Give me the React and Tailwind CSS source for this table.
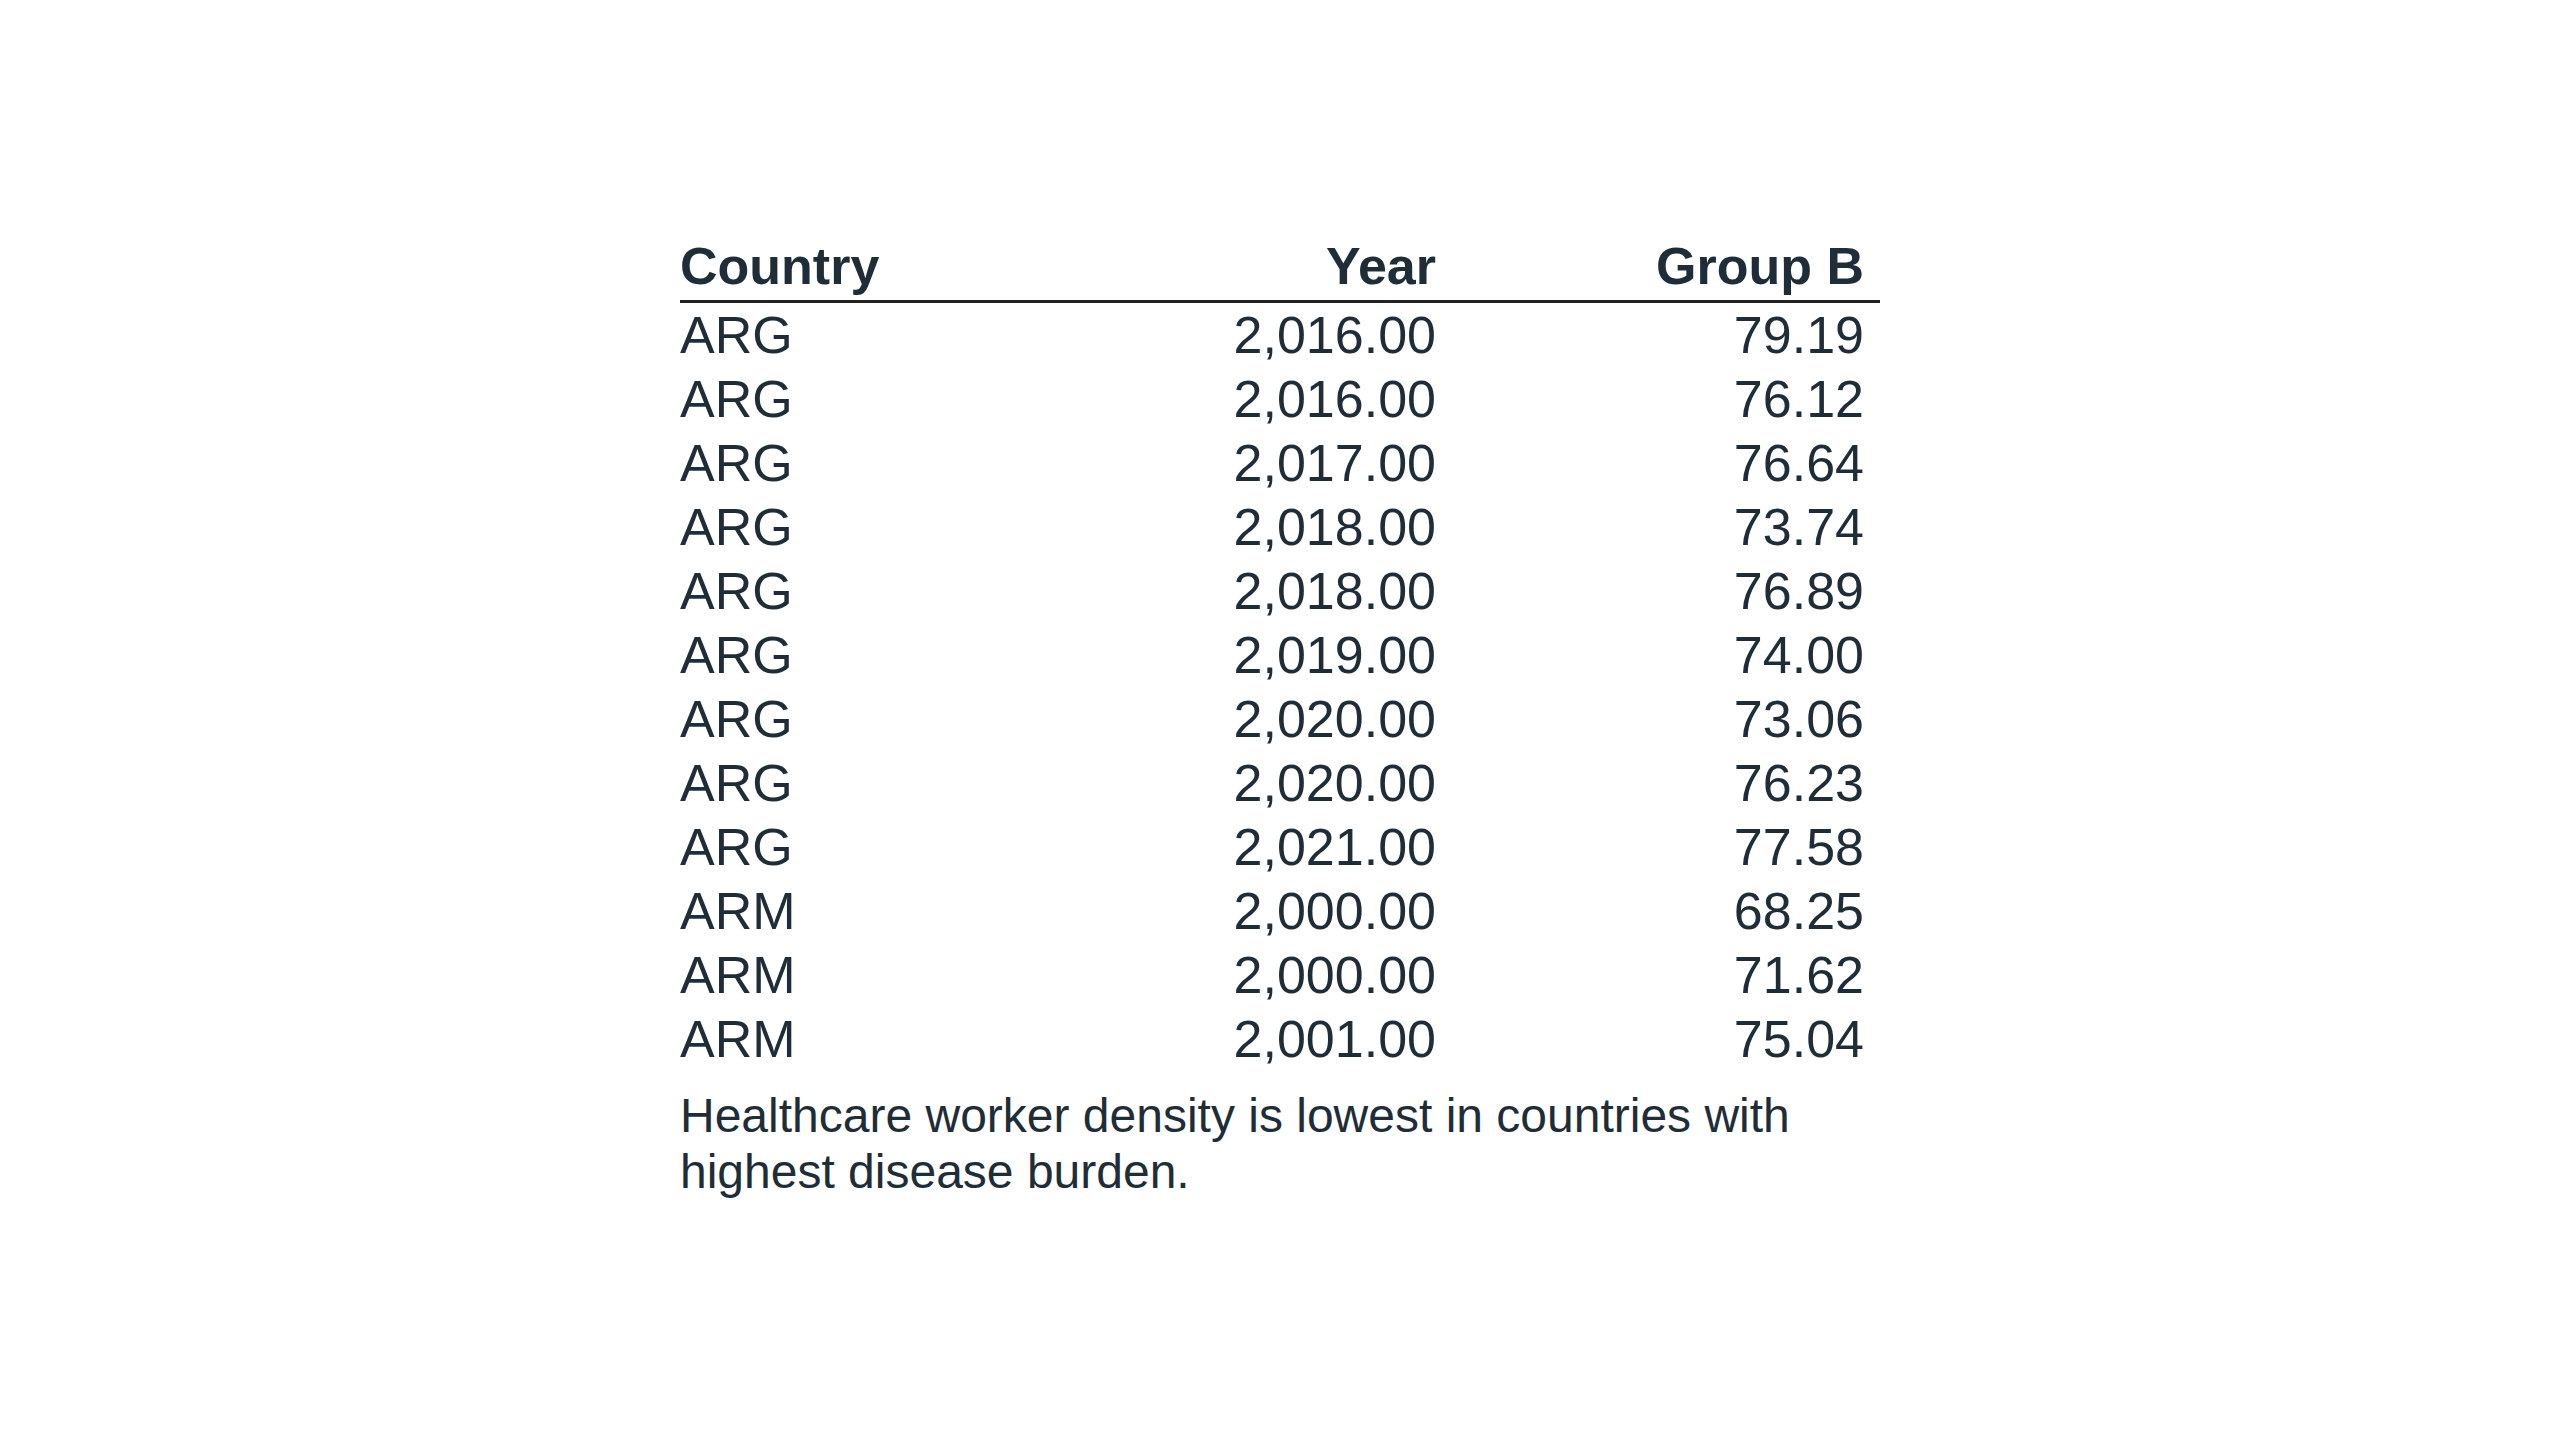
const rows = [
  ["ARG", "2,016.00", "79.19"],
  ["ARG", "2,016.00", "76.12"],
  ["ARG", "2,017.00", "76.64"],
  ["ARG", "2,018.00", "73.74"],
  ["ARG", "2,018.00", "76.89"],
  ["ARG", "2,019.00", "74.00"],
  ["ARG", "2,020.00", "73.06"],
  ["ARG", "2,020.00", "76.23"],
  ["ARG", "2,021.00", "77.58"],
  ["ARM", "2,000.00", "68.25"],
  ["ARM", "2,000.00", "71.62"],
  ["ARM", "2,001.00", "75.04"],
];

const App = () => {
  return (
    <div className="min-h-screen w-full bg-white flex justify-center pt-[234px] font-['Liberation_Sans',Arial,sans-serif] text-[#1e2d37]">
      <div className="w-[1200px] flex flex-col">
        <div className="flex text-[52px] leading-[64px] font-bold pb-[2px] border-b-[3px] border-[#222222]">
          <div className="w-[400px] text-left">Country</div>
          <div className="w-[372px] text-right pr-[16px]">Year</div>
          <div className="w-[428px] text-right pr-[16px]">Group B</div>
        </div>
        {rows.map((r, i) => (
          <div key={i} className="flex text-[52px] leading-[64px]">
            <div className="w-[400px] text-left">{r[0]}</div>
            <div className="w-[372px] text-right pr-[16px]">{r[1]}</div>
            <div className="w-[428px] text-right pr-[16px]">{r[2]}</div>
          </div>
        ))}
        <p className="mt-[17px] text-[48px] leading-[56px]">
          Healthcare worker density is lowest in countries with highest disease
          burden.
        </p>
      </div>
    </div>
  );
};

export default App;
